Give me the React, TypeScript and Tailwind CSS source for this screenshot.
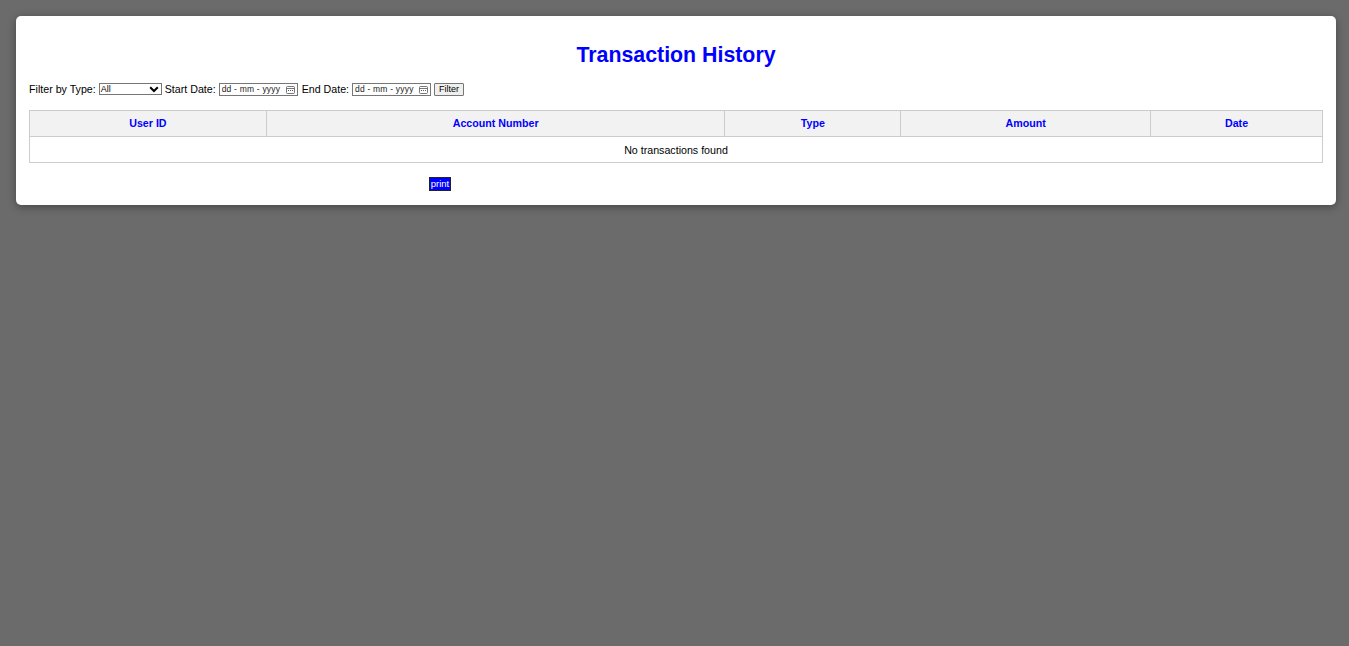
import React from "react";

function DateBox() {
  return (
    <div className="flex h-[13px] w-[79px] items-center justify-between border border-[#767676] bg-white pl-[2px] pr-[2px] text-[8.5px] leading-none text-[#222]">
      <span className="tracking-[0.2px]">dd - mm - yyyy</span>
      <svg width="9" height="9" viewBox="0 0 9 9" className="text-[#555]">
        <rect x="0.5" y="1.5" width="8" height="7" rx="1" fill="none" stroke="currentColor" strokeWidth="0.8" />
        <line x1="0.5" y1="3.5" x2="8.5" y2="3.5" stroke="currentColor" strokeWidth="0.8" />
        <rect x="2" y="5" width="1" height="1" fill="currentColor" />
        <rect x="4" y="5" width="1" height="1" fill="currentColor" />
        <rect x="6" y="5" width="1" height="1" fill="currentColor" />
      </svg>
    </div>
  );
}

export default function App() {
  const cols = [
    { label: "User ID", w: "w-[237px]" },
    { label: "Account Number", w: "w-[459px]" },
    { label: "Type", w: "w-[176px]" },
    { label: "Amount", w: "w-[250px]" },
    { label: "Date", w: "w-[172px]" },
  ];
  return (
    <div className="min-h-[646px] bg-[#6b6b6b] pt-[16px] pl-[16px] pr-[13px] font-['Liberation_Sans',Arial,sans-serif]">
      <div className="rounded-[5px] bg-white px-[13px] pt-[13px] pb-[14px] shadow-[0_2px_8px_rgba(0,0,0,0.35)]">
        <h1 className="mt-[14px] mb-[13px] text-center text-[21.33px] font-bold leading-[25px] text-[#0000ff]">
          Transaction History
        </h1>
        <div className="flex h-[16px] items-center text-[10.67px] leading-none text-black">
          <span>Filter by Type:</span>
          <div className="ml-[3px] flex h-[12px] w-[63px] items-center justify-between border border-[#767676] bg-white pl-[1px] pr-[2px] text-[9px]">
            <span>All</span>
            <svg width="10" height="7" viewBox="0 0 10 7">
              <path d="M1.2 1.2 L5 5 L8.8 1.2" fill="none" stroke="#000" strokeWidth="2" />
            </svg>
          </div>
          <span className="ml-[3px]">Start Date:</span>
          <div className="ml-[3px]">
            <DateBox />
          </div>
          <span className="ml-[4px]">End Date:</span>
          <div className="ml-[3px]">
            <DateBox />
          </div>
          <div className="ml-[3px] flex h-[13px] w-[30px] items-center justify-center rounded-[1px] border border-[#767676] bg-[#efefef] text-[9px]">
            Filter
          </div>
        </div>
        <table className="mt-[13px] w-[1294px] border-collapse text-[10.67px]">
          <thead>
            <tr className="bg-[#f2f2f2]">
              {cols.map((c) => (
                <th
                  key={c.label}
                  className={`${c.w} h-[26px] border border-[#cccccc] pb-[2px] text-center font-bold text-[#0000ff]`}
                >
                  {c.label}
                </th>
              ))}
            </tr>
          </thead>
          <tbody>
            <tr>
              <td colSpan={5} className="h-[26px] border border-[#cccccc] text-center text-black">
                No transactions found
              </td>
            </tr>
          </tbody>
        </table>
        <div className="mt-[14px] flex">
          <div className="ml-[400px] flex h-[14px] w-[22px] items-center justify-center border border-[#222] bg-[#0000ff] text-[9.5px] leading-none text-white">
            print
          </div>
        </div>
      </div>
    </div>
  );
}
